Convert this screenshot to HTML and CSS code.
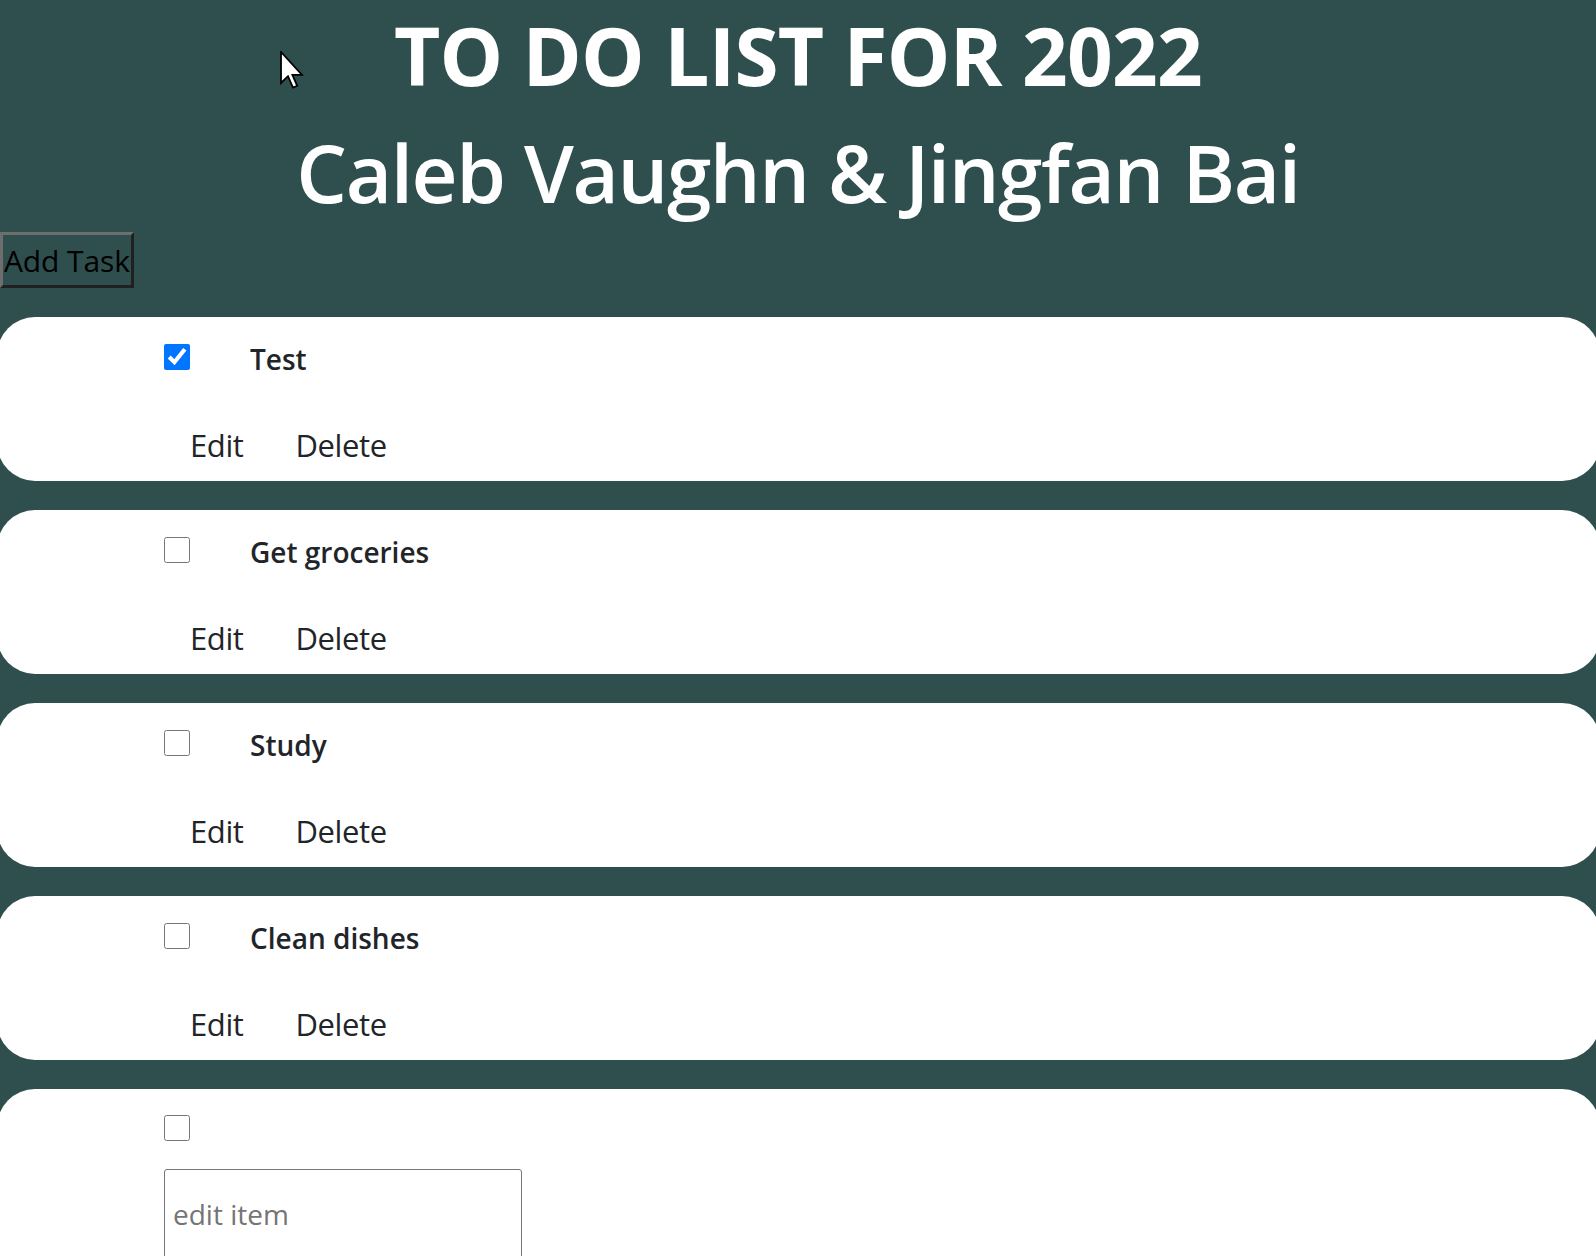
FILE: index.html
```html
<!DOCTYPE html>
<html>
<head>
<meta charset="utf-8">
<link rel="stylesheet" href="styles.css">
</head>
<body>
<header class="header">
  <h1 class="title">TO DO LIST FOR 2022</h1>
  <h2 class="names">Caleb Vaughn &amp; Jingfan Bai</h2>
</header>
<button class="add-btn">Add Task</button>
<ul class="list">
  <li class="card">
    <div class="row-top">
      <input type="checkbox" class="check" checked>
      <span class="task">Test</span>
    </div>
    <div class="row-actions">
      <button class="act">Edit</button>
      <button class="act">Delete</button>
    </div>
  </li>
  <li class="card">
    <div class="row-top">
      <input type="checkbox" class="check">
      <span class="task">Get groceries</span>
    </div>
    <div class="row-actions">
      <button class="act">Edit</button>
      <button class="act">Delete</button>
    </div>
  </li>
  <li class="card">
    <div class="row-top">
      <input type="checkbox" class="check">
      <span class="task">Study</span>
    </div>
    <div class="row-actions">
      <button class="act">Edit</button>
      <button class="act">Delete</button>
    </div>
  </li>
  <li class="card">
    <div class="row-top">
      <input type="checkbox" class="check">
      <span class="task">Clean dishes</span>
    </div>
    <div class="row-actions">
      <button class="act">Edit</button>
      <button class="act">Delete</button>
    </div>
  </li>
  <li class="card card-edit">
    <div class="row-top">
      <input type="checkbox" class="check">
    </div>
    <input type="text" class="edit-input" placeholder="edit item">
  </li>
</ul>
<svg class="cursor" width="24" height="38" viewBox="0 0 12 19">
  <path d="M0.5 0.5 L0.5 16 L4 12.6 L6.5 18.3 L8.6 17.4 L6.2 11.9 L11 11.9 Z" fill="#fff" stroke="#000" stroke-width="0.9" stroke-linejoin="miter"/>
</svg>
</body>
</html>
```
FILE: styles.css
```css
html, body {
  margin: 0;
  padding: 0;
}
body {
  background: #2f4f4f;
  font-family: "Open Sans", "Noto Sans", sans-serif;
  overflow-x: hidden;
  color: #212529;
}
.header {
  text-align: center;
  color: #fff;
  padding-top: 7px;
}
.title {
  margin: 0;
  font-size: 80px;
  line-height: 96px;
  font-weight: 700;
  letter-spacing: -0.7px;
}
.names {
  margin: 21px 0 0;
  font-size: 80px;
  line-height: 96px;
  font-weight: 600;
  letter-spacing: -1.4px;
}
.add-btn {
  display: block;
  margin: 12px 0 0;
  height: 56px;
  padding: 0 1px;
  background: transparent;
  border: 3px solid;
  border-color: #6e6e6e #202020 #202020 #6e6e6e;
  font-family: "Open Sans", sans-serif;
  font-size: 30px;
  letter-spacing: -0.1px;
  color: #000;
}
.list {
  list-style: none;
  margin: 29px 0 0 -3px;
  padding: 0;
}
.card {
  width: 1603px;
  height: 164px;
  box-sizing: border-box;
  background: #fff;
  border-radius: 38px;
  margin-bottom: 29px;
  padding: 27px 0 0 167px;
}
.card-edit {
  height: 220px;
  padding-top: 26px;
}
.row-top {
  display: flex;
  align-items: flex-start;
  height: 34px;
}
.check {
  width: 26px;
  height: 26px;
  margin: 0;
  accent-color: #0075ff;
}
.task {
  margin: -2px 0 0 60px;
  font-size: 28px;
  line-height: 34px;
  font-weight: 600;
  color: #212529;
}
.row-actions {
  display: flex;
  gap: 52px;
  margin: 47px 0 0 26px;
}
.act {
  background: transparent;
  border: 0;
  padding: 0;
  font-family: "Open Sans", sans-serif;
  font-size: 31px;
  letter-spacing: -0.4px;
  line-height: 40px;
  color: #212529;
}
.edit-input {
  display: block;
  margin-top: 20px;
  width: 358px;
  height: 90px;
  box-sizing: border-box;
  border: 1px solid #767676;
  border-radius: 3px;
  padding: 0 8px;
  font-family: "Open Sans", sans-serif;
  font-size: 28px;
}
.edit-input::placeholder {
  color: #757575;
}
.cursor {
  position: absolute;
  left: 280px;
  top: 51px;
}
```
